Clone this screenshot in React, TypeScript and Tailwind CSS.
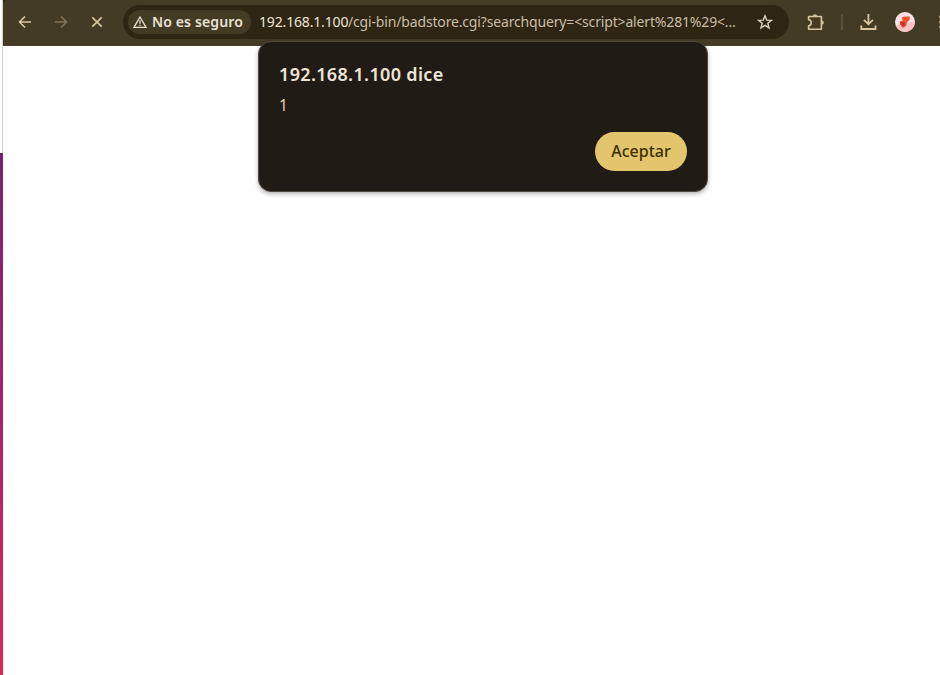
import React from 'react';

function BackArrow({ flip = false }: { flip?: boolean }) {
  return (
    <svg width="14" height="14" viewBox="0 0 14 14" fill="none" stroke="currentColor" strokeWidth="1.6" className={flip ? 'rotate-180' : ''}>
      <path d="M13 7H2M7 1.5L1.5 7L7 12.5" />
    </svg>
  );
}

function Toolbar() {
  return (
    <div className="bg-[#2b2719]">
      <header className="flex h-[46px] w-full shrink-0 items-start overflow-hidden rounded-tl-[4px] border-b border-[#4d422f] bg-[#443b24] pt-[5px] text-[#d9c6a1]">
        <div className="flex h-[34px] w-[120px] shrink-0 items-center pl-[15px]">
          <BackArrow />
          <span className="ml-[22px] text-[#817457]"><BackArrow flip /></span>
          <svg className="ml-[23px]" width="12" height="12" viewBox="0 0 12 12" stroke="currentColor" strokeWidth="1.7">
            <path d="M1.3 1.3L10.7 10.7M10.7 1.3L1.3 10.7" />
          </svg>
        </div>
        <div className="flex h-[34px] w-[666px] shrink-0 items-center rounded-full bg-[#2e2512] pl-[5px]">
          <div className="flex h-6 w-[123px] shrink-0 items-center rounded-full bg-[#443b24] pl-[5px] text-[#e9e1d3]">
            <svg width="14" height="12" viewBox="0 0 14 12" fill="none" stroke="currentColor" strokeWidth="1.3">
              <path d="M7 1L13 11.3H1L7 1ZM7 4.3V7.7M7 8.7V10" />
            </svg>
            <span className="ml-[5px] whitespace-nowrap text-[14px] leading-5 font-semibold tracking-[0.13px]">No es seguro</span>
          </div>
          <div className="ml-2 flex h-5 w-[478px] shrink-0 whitespace-nowrap text-[14px] leading-5">
            <span className="w-[89px] shrink-0 tracking-[-0.16px] text-[#eee5d7]">192.168.1.100</span>
            <span className="tracking-[-0.16px] text-[#c9bda8]">/cgi-bin/badstore.cgi?searchquery=&lt;script&gt;alert%281%29&lt;…</span>
          </div>
          <svg className="ml-[20px] shrink-0 text-[#ddd2bf]" width="16" height="16" viewBox="0 0 16 16" fill="none" stroke="currentColor" strokeWidth="1.4">
            <path d="M8 1.8L9.7 6.1L14.4 6.4L10.8 9.3L12 13.9L8 11.4L4 13.9L5.2 9.3L1.6 6.4L6.3 6.1Z" />
          </svg>
        </div>
        <div className="flex h-[34px] shrink-0 items-center pl-[18px]">
          <svg width="18" height="18" viewBox="-0.4 0 18 18" fill="none" stroke="currentColor" strokeWidth="1.6" strokeLinejoin="round">
            <path d="M1.2 3.5H14V16.2H1.2V12.8C4.7 12.6 4.7 7 1.2 6.8Z" />
            <path d="M5.5 3.3A2.1 2.1 0 0 1 9.7 3.3ZM14.3 7.6A2.1 2.1 0 0 1 14.3 11.8Z" fill="currentColor" stroke="none" />
          </svg>
          <div className="ml-[16px] h-4 w-[2px] bg-[#5b5038]" />
          <svg className="ml-[17px]" width="17" height="16" viewBox="-0.4 0 17 16" fill="none" stroke="currentColor" strokeWidth="1.8">
            <path d="M8 0V10M3.5 5.8L8 10.3L12.5 5.8M0.9 11.5V15H15.1V11.5" />
          </svg>
          <svg className="ml-[18px]" width="20" height="20" viewBox="0 0 20 20">
            <circle cx="10" cy="10" r="10" fill="#ffe0e6" />
            <path d="M1 14L7 11L19.8 10Q19 18 11 20Q4 20 1 14Z" fill="#ffc1c5" />
            <path d="M7 5L10 4.5L14.8 4.5L14.5 8L12 10L11 14L8 16L5.5 13L5 9.5L7.5 9Z" fill="#f6512c" />
            <path d="M5 9.5L9 10L11 12L8.5 14.5L5.5 12.5Z" fill="#c73625" />
          </svg>
          <svg className="ml-[22px]" width="6" height="16" viewBox="0 0 6 16" fill="#ad9d7c">
            <circle cx="3.3" cy="3" r="1.4" /><circle cx="3.3" cy="8" r="1.4" /><circle cx="3.3" cy="13" r="1.4" />
          </svg>
        </div>
      </header>
    </div>
  );
}

export default function App() {
  return (
    <div className="relative flex h-[675px] w-[940px] overflow-hidden bg-white font-['Noto_Sans',sans-serif]">
      <aside className="flex w-[3px] shrink-0 flex-col">
        <div className="h-[153px] border-r border-[#d2d2d2] bg-white" />
        <div className="flex-1 bg-linear-to-b from-[#77216f] via-[#ac2069] to-[#e02652]" />
      </aside>
      <main className="flex min-w-0 flex-1 flex-col"><Toolbar /></main>
      <section role="dialog" className="absolute top-[41px] left-[258px] flex h-[151px] w-[450px] flex-col rounded-[13px] border border-[#514a3e] bg-[#201b15] px-5 pt-5 shadow-[0_2px_4px_rgba(0,0,0,0.3)]">
        <h1 className="h-6 whitespace-nowrap text-[18px] leading-6 font-semibold tracking-[0.34px] text-[#eee5d7]">192.168.1.100 dice</h1>
        <p className="mt-[9px] h-5 text-[15.5px] leading-5 text-[#e2cfae]">1</p>
        <button className="mt-[17px] flex h-[39px] w-[92px] items-center justify-center self-end rounded-full bg-[#e3c56d] pb-[2px] text-[16px] font-medium text-[#3d2f00]">Aceptar</button>
      </section>
    </div>
  );
}
